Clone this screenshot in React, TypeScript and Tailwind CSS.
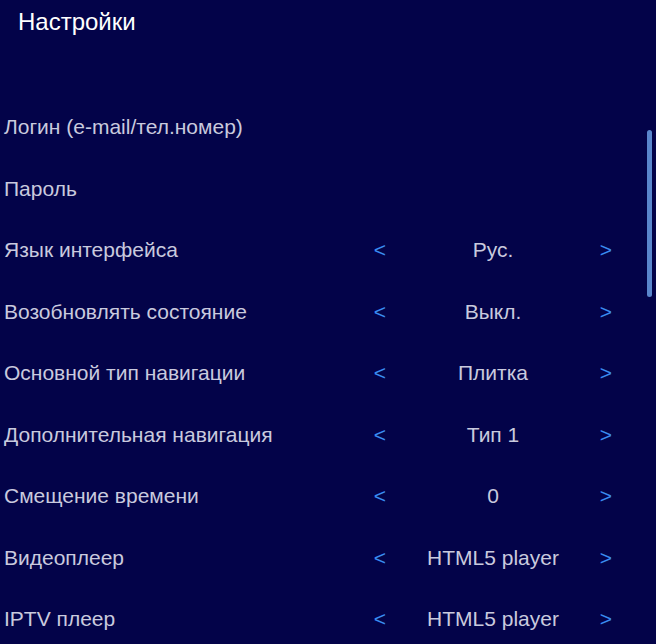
const rows: { label: string; value?: string }[] = [
  { label: "Логин (e-mail/тел.номер)" },
  { label: "Пароль" },
  { label: "Язык интерфейса", value: "Рус." },
  { label: "Возобновлять состояние", value: "Выкл." },
  { label: "Основной тип навигации", value: "Плитка" },
  { label: "Дополнительная навигация", value: "Тип 1" },
  { label: "Смещение времени", value: "0" },
  { label: "Видеоплеер", value: "HTML5 player" },
  { label: "IPTV плеер", value: "HTML5 player" },
];

export default function App() {
  return (
    <div className="relative h-[644px] w-[656px] overflow-hidden bg-[#030349] font-['Liberation_Sans',Arial,sans-serif]">
      <div className="flex h-[96px] items-start pl-[18px] pt-[7px]">
        <h1 className="text-[24px] leading-[30px] text-white">Настройки</h1>
      </div>

      <div className="flex flex-col">
        {rows.map((row) => (
          <div key={row.label} className="flex h-[61.5px] items-center pl-[4px]">
            <div className="flex-1 text-[21px] text-[#c9cade]">{row.label}</div>
            {row.value !== undefined && (
              <div className="mr-[40px] flex w-[246px] items-center text-[21px]">
                <span className="w-[20px] text-center text-[#3a8cf0]">&lt;</span>
                <span className="flex-1 text-center text-[#c9cade]">{row.value}</span>
                <span className="w-[20px] text-center text-[#3a8cf0]">&gt;</span>
              </div>
            )}
          </div>
        ))}
      </div>

      {/* scroll thumb */}
      <div className="absolute left-[647px] top-[130px] h-[167px] w-[5px] rounded-full bg-[#5a86cc]" />
    </div>
  );
}
